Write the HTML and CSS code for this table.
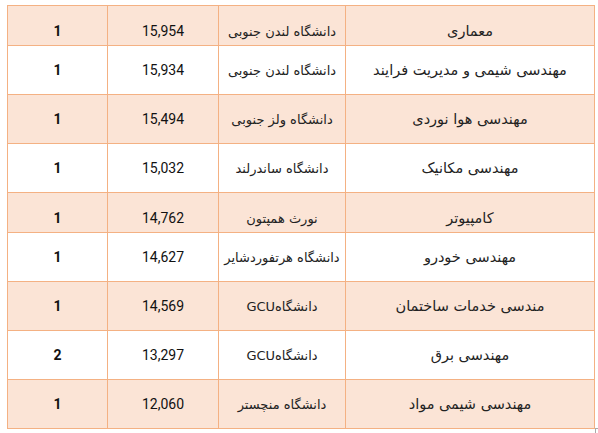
FILE: index.html
```html
<!DOCTYPE html>
<html lang="fa">
<head>
<meta charset="utf-8">
<link rel="stylesheet" href="styles.css">
</head>
<body>
<table class="grid" dir="rtl">
  <colgroup>
    <col class="c-major"><col class="c-uni"><col class="c-num"><col class="c-rank">
  </colgroup>
  <tbody>
    <tr class="alt short"><td class="major">معماری</td><td class="uni">دانشگاه لندن جنوبی</td><td class="num">15,954</td><td class="rank">1</td></tr>
    <tr><td class="major">مهندسی شیمی و مدیریت فرایند</td><td class="uni">دانشگاه لندن جنوبی</td><td class="num">15,934</td><td class="rank">1</td></tr>
    <tr class="alt"><td class="major">مهندسی هوا نوردی</td><td class="uni">دانشگاه ولز جنوبی</td><td class="num">15,494</td><td class="rank">1</td></tr>
    <tr><td class="major">مهندسی مکانیک</td><td class="uni">دانشگاه ساندرلند</td><td class="num">15,032</td><td class="rank">1</td></tr>
    <tr class="alt short"><td class="major">کامپیوتر</td><td class="uni">نورث همپتون</td><td class="num">14,762</td><td class="rank">1</td></tr>
    <tr><td class="major">مهندسی خودرو</td><td class="uni">دانشگاه هرتفوردشایر</td><td class="num">14,627</td><td class="rank">1</td></tr>
    <tr class="alt"><td class="major">مندسی خدمات ساختمان</td><td class="uni">دانشگاهGCU</td><td class="num">14,569</td><td class="rank">1</td></tr>
    <tr><td class="major">مهندسی برق</td><td class="uni">دانشگاهGCU</td><td class="num">13,297</td><td class="rank">2</td></tr>
    <tr class="alt"><td class="major">مهندسی شیمی مواد</td><td class="uni">دانشگاه منچستر</td><td class="num">12,060</td><td class="rank">1</td></tr>
  </tbody>
</table>
<span class="corner"></span>
</body>
</html>
```
FILE: styles.css
```css
html, body {
  margin: 0;
  background: #ffffff;
}
body {
  padding: 5px 0 0 7px;
  font-family: Roboto, "DejaVu Sans", sans-serif;
  color: #111;
  position: relative;
  width: 598px;
  height: 433px;
  box-sizing: border-box;
  overflow: hidden;
}
.grid {
  border-collapse: collapse;
  table-layout: fixed;
  width: 587px;
}
.c-major { width: 249px; }
.c-uni { width: 127px; }
.c-num { width: 111px; }
.c-rank { width: 100px; }
.grid td {
  border: 1px solid #f4b183;
  height: 49px;
  padding: 16px 2px 0;
  box-sizing: border-box;
  vertical-align: top;
  text-align: center;
  font-size: 14px;
  line-height: 17px;
  white-space: nowrap;
}
.grid tr.short td {
  height: 40px;
  padding-top: 17px;
}
.grid tr.alt td {
  background: #fbe4d6;
}
.grid td.major {
  font-family: "DejaVu Sans", sans-serif;
  font-size: 14.5px;
  color: #222;
}
.grid td.uni {
  font-family: "DejaVu Sans", sans-serif;
  font-size: 13px;
  color: #222;
}
.grid td.rank {
  font-weight: 700;
}
.corner {
  position: absolute;
  left: 595px;
  top: 428px;
  width: 4px;
  height: 6px;
  border-top: 1px solid #aaa;
  border-left: 1px solid #aaa;
}
```
